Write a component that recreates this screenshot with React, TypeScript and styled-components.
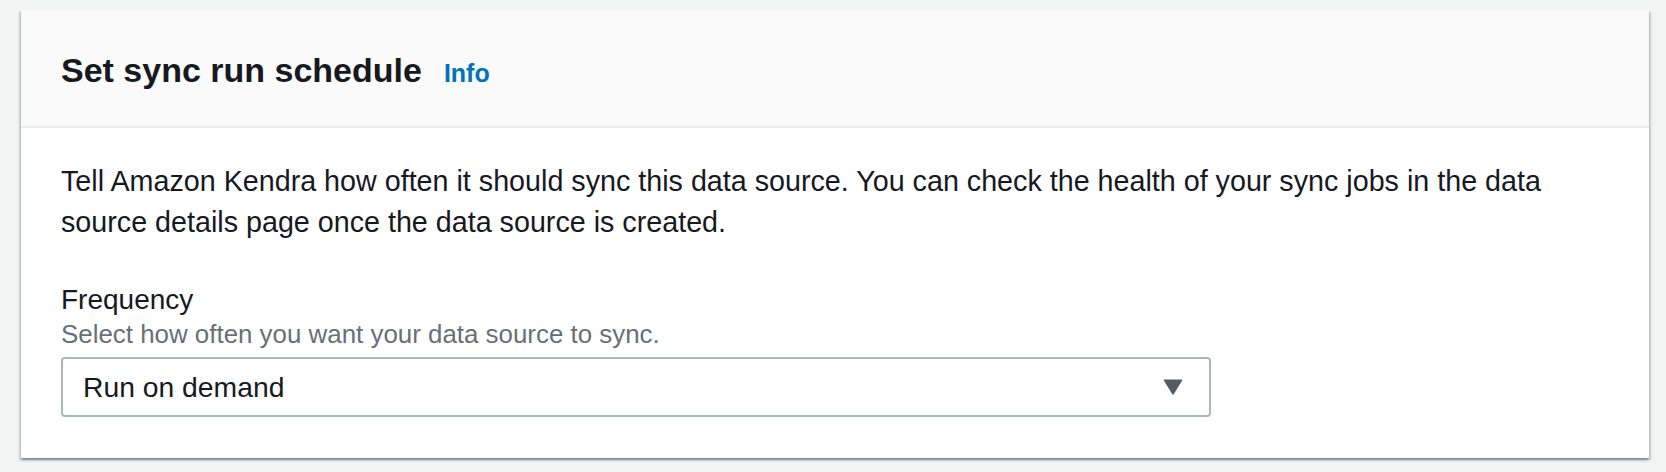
import React from "react";
import styled, { createGlobalStyle } from "styled-components";

const GlobalStyle = createGlobalStyle`
  html, body {
    margin: 0;
    padding: 0;
    background: #f2f3f3;
    font-family: "Liberation Sans", Arial, sans-serif;
    color: #16191f;
  }
  * { box-sizing: border-box; }
`;

const Page = styled.div`
  padding: 10px 17px 14px 21px;
  background: #f2f3f3;
`;

const Card = styled.section`
  background: #ffffff;
  box-shadow: 0 2px 2px 0 rgba(0, 28, 36, 0.3),
    2px 2px 2px 0 rgba(0, 28, 36, 0.15),
    -2px 2px 2px 0 rgba(0, 28, 36, 0.15);
`;

const Header = styled.header`
  display: flex;
  align-items: baseline;
  padding: 38px 40px 34px;
  background: #fafafa;
  border-bottom: 2px solid #eaeded;
`;

const Title = styled.h2`
  margin: 0;
  font-size: 34px;
  line-height: 44px;
  font-weight: 700;
  color: #16191f;
`;

const InfoLink = styled.a`
  margin-left: 22px;
  font-size: 25px;
  font-weight: 700;
  color: #0073bb;
  text-decoration: none;
  cursor: pointer;
`;

const Body = styled.div`
  padding: 33px 40px 41px;
`;

const Paragraph = styled.p`
  margin: 0;
  font-size: 28.7px;
  line-height: 41px;
  color: #16191f;
`;

const Field = styled.div`
  margin-top: 38px;
  display: flex;
  flex-direction: column;
`;

const Label = styled.label`
  font-size: 28px;
  line-height: 38px;
  color: #16191f;
`;

const Description = styled.div`
  font-size: 25.9px;
  line-height: 30px;
  color: #687078;
`;

const SelectBox = styled.div`
  margin-top: 8px;
  width: 1150px;
  height: 60px;
  display: flex;
  align-items: center;
  justify-content: space-between;
  padding: 0 26px 0 20px;
  border: 2px solid #aab7b8;
  border-radius: 4px;
  background: #ffffff;
  cursor: pointer;
`;

const SelectValue = styled.span`
  font-size: 28.3px;
  line-height: 40px;
  color: #16191f;
`;

const Caret = () => (
  <svg width="20" height="16" viewBox="0 0 20 16" aria-hidden="true">
    <path
      d="M1.5 1.2 L18.5 1.2 L10 14.8 Z"
      fill="#545b64"
      stroke="#545b64"
      strokeWidth="1.6"
      strokeLinejoin="round"
    />
  </svg>
);

export default function App() {
  return (
    <>
      <GlobalStyle />
      <Page>
        <Card>
          <Header>
            <Title>Set sync run schedule</Title>
            <InfoLink>Info</InfoLink>
          </Header>
          <Body>
            <Paragraph>
              Tell Amazon Kendra how often it should sync this data source. You can check the health of your sync jobs in the data source details page once the data source is created.
            </Paragraph>
            <Field>
              <Label>Frequency</Label>
              <Description>Select how often you want your data source to sync.</Description>
              <SelectBox role="button">
                <SelectValue>Run on demand</SelectValue>
                <Caret />
              </SelectBox>
            </Field>
          </Body>
        </Card>
      </Page>
    </>
  );
}
